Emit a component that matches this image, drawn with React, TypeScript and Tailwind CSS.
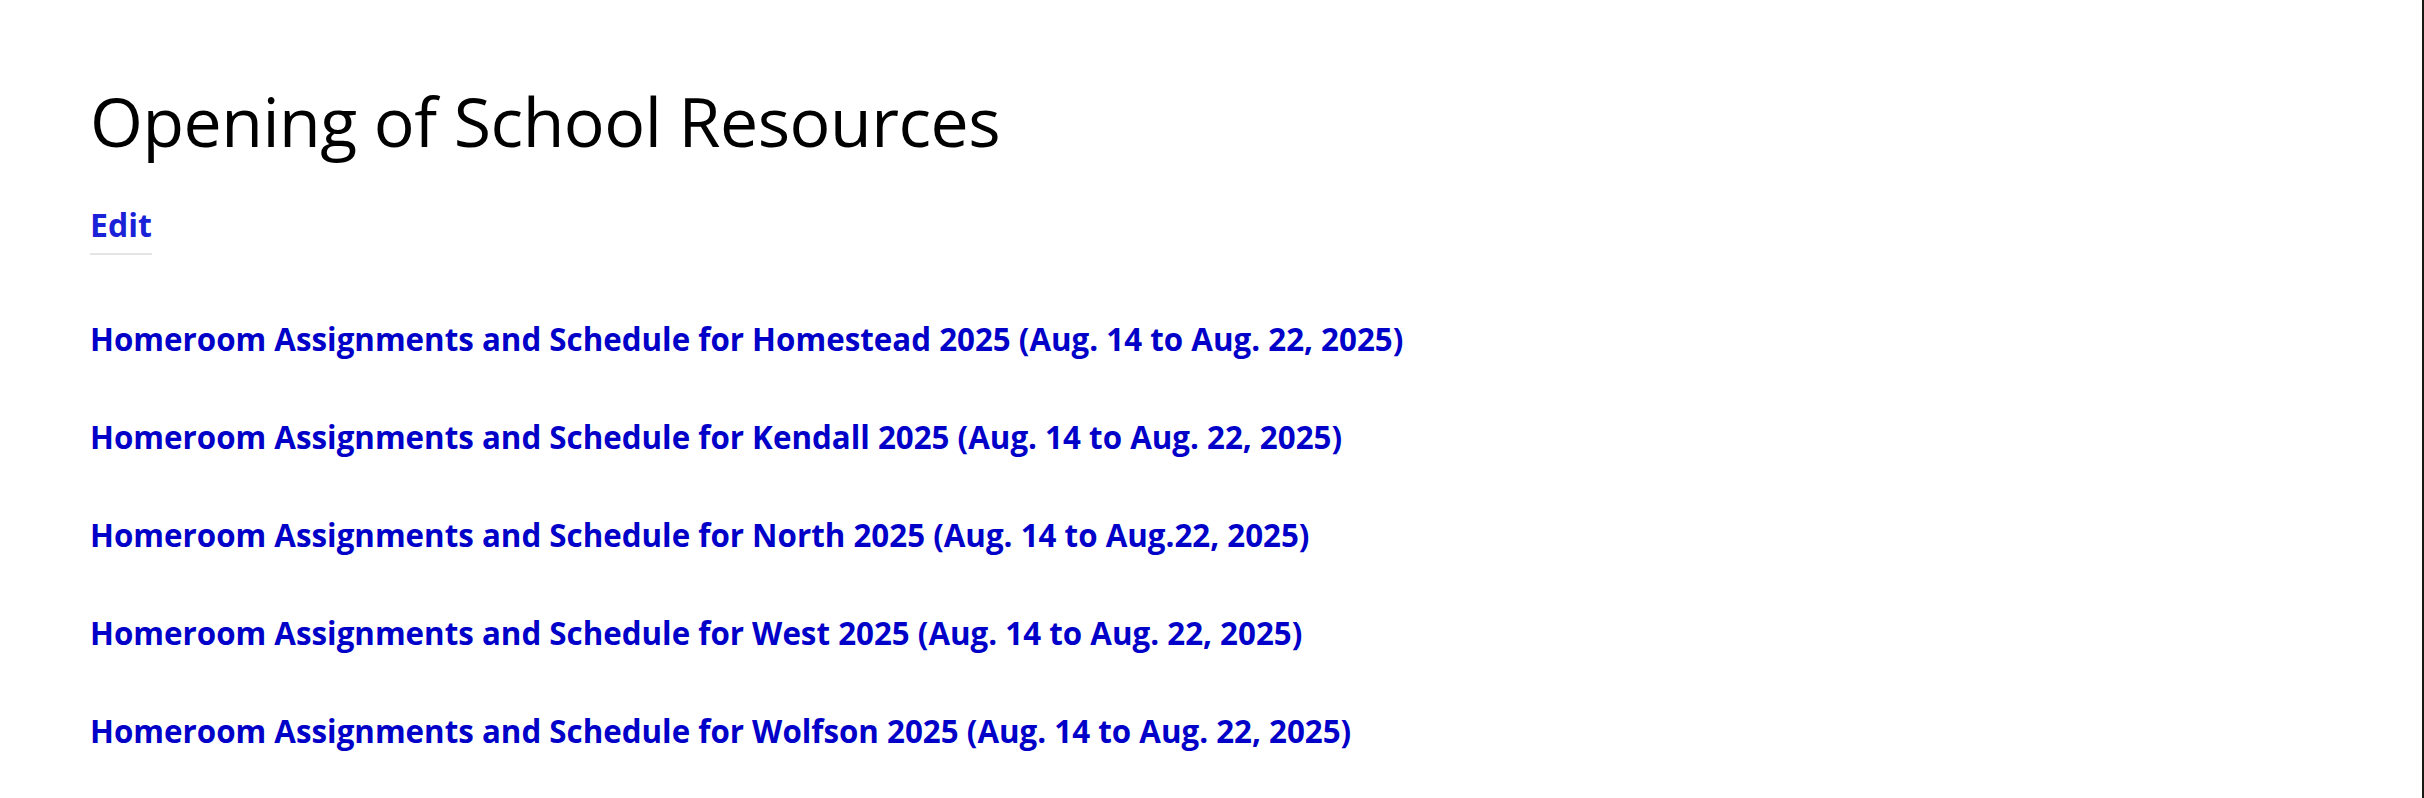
import React from 'react';

const links = [
  'Homeroom Assignments and Schedule for Homestead 2025 (Aug. 14 to Aug. 22, 2025)',
  'Homeroom Assignments and Schedule for Kendall 2025 (Aug. 14 to Aug. 22, 2025)',
  'Homeroom Assignments and Schedule for North 2025 (Aug. 14 to Aug.22, 2025)',
  'Homeroom Assignments and Schedule for West 2025 (Aug. 14 to Aug. 22, 2025)',
  'Homeroom Assignments and Schedule for Wolfson 2025 (Aug. 14 to Aug. 22, 2025)',
];

export default function App() {
  return (
    <div className="w-[2424px] h-[798px] bg-white border-r-2 border-[#1a1a14] overflow-hidden font-['Open_Sans',sans-serif]">
      <div className="pl-[90px] pt-[73px]">
        <h1 className="text-[68px] leading-[96px] font-normal text-black tracking-[-0.5px]">
          Opening of School Resources
        </h1>

        <div className="mt-[36px]">
          <a href="#" className="inline-block text-[32px] leading-[40px] font-bold text-[#1a22d8] border-b-2 border-[#e5e5e5] pb-[8px]">
            Edit
          </a>
        </div>

        <ul className="mt-[64px] flex flex-col gap-[58px]">
          {links.map((l) => (
            <li key={l}>
              <a href="#" className="text-[31.3px] leading-[40px] font-bold text-[#0000c8]">
                {l}
              </a>
            </li>
          ))}
        </ul>
      </div>
    </div>
  );
}
